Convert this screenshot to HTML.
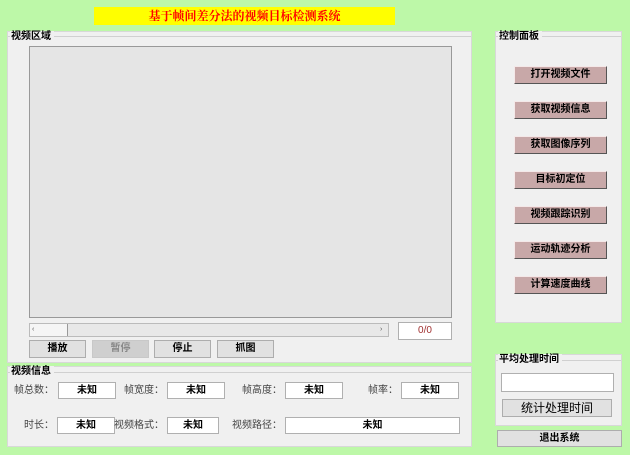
<!DOCTYPE html>
<html><head><meta charset="utf-8"><style>
*{margin:0;padding:0;box-sizing:border-box}
body{width:630px;height:455px;background:#bdf8a8;position:relative;overflow:hidden;font-family:"Liberation Sans","Noto Sans CJK SC",sans-serif;font-size:10px;color:#000}
.a{position:absolute}
.panel{position:absolute;background:#f0f0f0;border:1px solid #d8d8d8}
.lg{position:absolute;background:#f0f0f0;font-weight:bold;font-size:10px;padding:0 3px 0 1px;line-height:12px}
.line{position:absolute;height:1px;background:#d0d0d0}
.btn{position:absolute;background:#e1e1e1;border:1px solid #adadad;text-align:center;font-weight:bold;font-size:10px;line-height:16px}
.pb{position:absolute;background:#c8a8a8;border:1px solid;border-color:#f4e8e8 #555 #555 #f4e8e8;text-align:center;font-weight:bold;font-size:10px;line-height:15px}
.box{position:absolute;background:#fff;border:1px solid #b0b0b0;text-align:center;font-weight:bold;line-height:15px;font-size:10px}
.lb{position:absolute;font-size:10px;color:#444;line-height:18px;text-align:right;white-space:nowrap}
</style></head><body>
<div class="a" style="left:94px;top:7px;width:301px;height:18px;background:#ffff00;color:#ff0000;font-family:'Liberation Serif','Noto Serif CJK SC',serif;font-weight:bold;font-size:12px;text-align:center;line-height:18px">基于帧间差分法的视频目标检测系统</div>

<div class="panel" style="left:7px;top:31px;width:465px;height:332px"></div>
<div class="line" style="left:8px;top:36px;width:463px"></div>
<div class="lg" style="left:10px;top:31px">视频区域</div>
<div class="a" style="left:29px;top:46px;width:423px;height:272px;background:#e5e5e5;border:1px solid #999"></div>
<div class="a" style="left:29px;top:323px;width:360px;height:14px;background:#e8e8e8;border:1px solid #bbb"></div>
<div class="a" style="left:30px;top:324px;width:38px;height:12px;background:#f5f5f5;border-right:1px solid #999;font-size:7px;line-height:12px;color:#555">&nbsp;‹</div>
<div class="a" style="left:380px;top:324px;font-size:7px;line-height:12px;color:#555">›</div>
<div class="box" style="left:398px;top:322px;width:54px;height:18px;color:#a03030;font-weight:normal;line-height:16px">0/0</div>
<div class="btn" style="left:29px;top:340px;width:57px;height:18px">播放</div>
<div class="btn" style="left:92px;top:340px;width:57px;height:18px;background:#cfcfcf;color:#888;border-color:#c8c8c8">暂停</div>
<div class="btn" style="left:154px;top:340px;width:57px;height:18px">停止</div>
<div class="btn" style="left:217px;top:340px;width:57px;height:18px">抓图</div>

<div class="panel" style="left:7px;top:366px;width:465px;height:81px"></div>
<div class="line" style="left:8px;top:372px;width:463px"></div>
<div class="lg" style="left:10px;top:366px">视频信息</div>
<div class="lb" style="left:4px;top:382px;width:50px">帧总数：</div>
<div class="box" style="left:58px;top:382px;width:58px;height:17px">未知</div>
<div class="lb" style="left:112px;top:382px;width:52px">帧宽度：</div>
<div class="box" style="left:167px;top:382px;width:58px;height:17px">未知</div>
<div class="lb" style="left:228px;top:382px;width:54px">帧高度：</div>
<div class="box" style="left:285px;top:382px;width:58px;height:17px">未知</div>
<div class="lb" style="left:350px;top:382px;width:48px">帧率：</div>
<div class="box" style="left:401px;top:382px;width:58px;height:17px">未知</div>
<div class="lb" style="left:10px;top:417px;width:44px">时长：</div>
<div class="box" style="left:57px;top:417px;width:58px;height:17px">未知</div>
<div class="lb" style="left:106px;top:417px;width:58px">视频格式：</div>
<div class="box" style="left:167px;top:417px;width:52px;height:17px">未知</div>
<div class="lb" style="left:220px;top:417px;width:62px">视频路径：</div>
<div class="box" style="left:285px;top:417px;width:175px;height:17px">未知</div>

<div class="panel" style="left:495px;top:31px;width:127px;height:292px"></div>
<div class="line" style="left:496px;top:36px;width:125px"></div>
<div class="lg" style="left:498px;top:31px">控制面板</div>
<div class="pb" style="left:514px;top:66px;width:93px;height:18px">打开视频文件</div>
<div class="pb" style="left:514px;top:101px;width:93px;height:18px">获取视频信息</div>
<div class="pb" style="left:514px;top:136px;width:93px;height:18px">获取图像序列</div>
<div class="pb" style="left:514px;top:171px;width:93px;height:18px">目标初定位</div>
<div class="pb" style="left:514px;top:206px;width:93px;height:18px">视频跟踪识别</div>
<div class="pb" style="left:514px;top:241px;width:93px;height:18px">运动轨迹分析</div>
<div class="pb" style="left:514px;top:276px;width:93px;height:18px">计算速度曲线</div>

<div class="panel" style="left:495px;top:354px;width:127px;height:72px"></div>
<div class="line" style="left:496px;top:360px;width:125px"></div>
<div class="lg" style="left:498px;top:354px">平均处理时间</div>
<div class="box" style="left:501px;top:373px;width:113px;height:19px"></div>
<div class="btn" style="left:502px;top:399px;width:110px;height:18px;font-size:12px;font-weight:normal">统计处理时间</div>
<div class="btn" style="left:497px;top:430px;width:125px;height:17px">退出系统</div>
</body></html>
